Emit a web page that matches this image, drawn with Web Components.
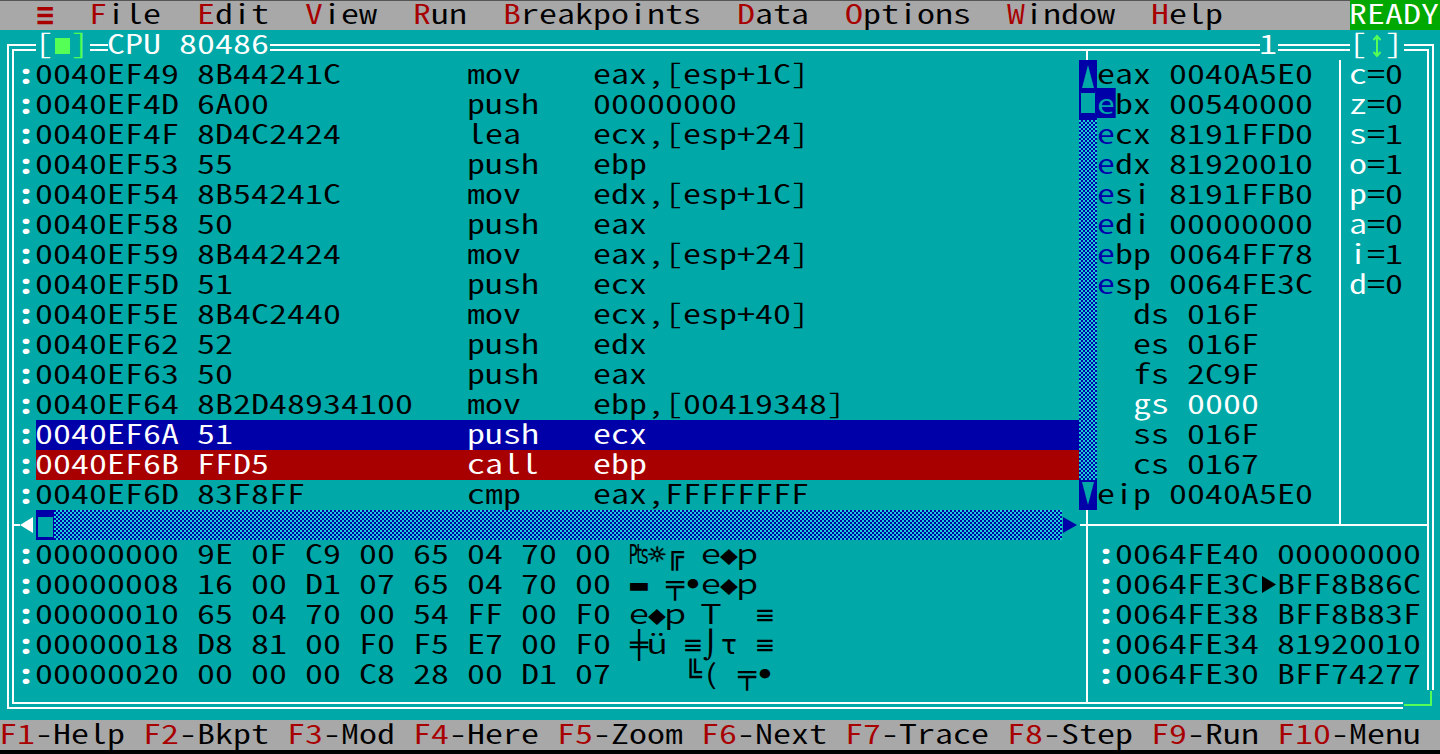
<!DOCTYPE html>
<html lang="en">
<head>
<meta charset="UTF-8">
<title>Turbo Debugger - CPU 80486</title>
<style>
    html, body { margin: 0; height: 754px; overflow: hidden; background: #000; }
</style>
</head>
<body>
<td-app>
    <td-menubar slot="menu">
        <td-menu icon>≡</td-menu>
        <td-menu>File</td-menu>
        <td-menu>Edit</td-menu>
        <td-menu>View</td-menu>
        <td-menu>Run</td-menu>
        <td-menu>Breakpoints</td-menu>
        <td-menu>Data</td-menu>
        <td-menu>Options</td-menu>
        <td-menu>Window</td-menu>
        <td-menu>Help</td-menu>
    </td-menubar>

    <cpu-window slot="desk">
        <div slot="code">
            <asm-row addr="0040EF49" hex="8B44241C" op="mov" args="eax,[esp+1C]"></asm-row>
            <asm-row addr="0040EF4D" hex="6A00" op="push" args="00000000"></asm-row>
            <asm-row addr="0040EF4F" hex="8D4C2424" op="lea" args="ecx,[esp+24]"></asm-row>
            <asm-row addr="0040EF53" hex="55" op="push" args="ebp"></asm-row>
            <asm-row addr="0040EF54" hex="8B54241C" op="mov" args="edx,[esp+1C]"></asm-row>
            <asm-row addr="0040EF58" hex="50" op="push" args="eax"></asm-row>
            <asm-row addr="0040EF59" hex="8B442424" op="mov" args="eax,[esp+24]"></asm-row>
            <asm-row addr="0040EF5D" hex="51" op="push" args="ecx"></asm-row>
            <asm-row addr="0040EF5E" hex="8B4C2440" op="mov" args="ecx,[esp+40]"></asm-row>
            <asm-row addr="0040EF62" hex="52" op="push" args="edx"></asm-row>
            <asm-row addr="0040EF63" hex="50" op="push" args="eax"></asm-row>
            <asm-row addr="0040EF64" hex="8B2D48934100" op="mov" args="ebp,[00419348]"></asm-row>
            <asm-row addr="0040EF6A" hex="51" op="push" args="ecx" state="cursor"></asm-row>
            <asm-row addr="0040EF6B" hex="FFD5" op="call" args="ebp" state="break"></asm-row>
            <asm-row addr="0040EF6D" hex="83F8FF" op="cmp" args="eax,FFFFFFFF"></asm-row>
        </div>
        <h-scroll slot="hbar"></h-scroll>
        <div slot="dump">
            <dump-row addr="00000000" bytes="9E 0F C9 00 65 04 70 00" ascii="₧☼╔ e◆p "></dump-row>
            <dump-row addr="00000008" bytes="16 00 D1 07 65 04 70 00" ascii="▬ ╤•e◆p "></dump-row>
            <dump-row addr="00000010" bytes="65 04 70 00 54 FF 00 F0" ascii="e◆p T  ≡"></dump-row>
            <dump-row addr="00000018" bytes="D8 81 00 F0 F5 E7 00 F0" ascii="╪ü ≡⌡τ ≡"></dump-row>
            <dump-row addr="00000020" bytes="00 00 00 C8 28 00 D1 07" ascii="   ╚( ╤•"></dump-row>
        </div>
        <v-scroll slot="vbar"></v-scroll>
        <div slot="regs">
            <reg-row name="eax" value="0040A5E0"></reg-row>
            <reg-row name="ebx" value="00540000" mark="thumb"></reg-row>
            <reg-row name="ecx" value="8191FFD0" mark="blue"></reg-row>
            <reg-row name="edx" value="81920010" mark="blue"></reg-row>
            <reg-row name="esi" value="8191FFB0" mark="blue"></reg-row>
            <reg-row name="edi" value="00000000" mark="blue"></reg-row>
            <reg-row name="ebp" value="0064FF78" mark="blue"></reg-row>
            <reg-row name="esp" value="0064FE3C" mark="blue"></reg-row>
            <reg-row name="  ds" value="016F"></reg-row>
            <reg-row name="  es" value="016F"></reg-row>
            <reg-row name="  fs" value="2C9F"></reg-row>
            <reg-row name="  gs" value="0000" changed></reg-row>
            <reg-row name="  ss" value="016F"></reg-row>
            <reg-row name="  cs" value="0167"></reg-row>
            <reg-row name="eip" value="0040A5E0"></reg-row>
        </div>
        <div slot="flags">
            <flag-row name="c" value="0"></flag-row>
            <flag-row name="z" value="0"></flag-row>
            <flag-row name="s" value="1"></flag-row>
            <flag-row name="o" value="1"></flag-row>
            <flag-row name="p" value="0"></flag-row>
            <flag-row name="a" value="0"></flag-row>
            <flag-row name="i" value="1"></flag-row>
            <flag-row name="d" value="0"></flag-row>
        </div>
        <div slot="stack">
            <stack-row addr="0064FE40" value="00000000"></stack-row>
            <stack-row addr="0064FE3C" value="BFF8B86C" top></stack-row>
            <stack-row addr="0064FE38" value="BFF8B83F"></stack-row>
            <stack-row addr="0064FE34" value="81920010"></stack-row>
            <stack-row addr="0064FE30" value="BFF74277"></stack-row>
        </div>
    </cpu-window>

    <td-status slot="status">
        <status-key k="F1">Help</status-key>
        <status-key k="F2">Bkpt</status-key>
        <status-key k="F3">Mod</status-key>
        <status-key k="F4">Here</status-key>
        <status-key k="F5">Zoom</status-key>
        <status-key k="F6">Next</status-key>
        <status-key k="F7">Trace</status-key>
        <status-key k="F8">Step</status-key>
        <status-key k="F9">Run</status-key>
        <status-key k="F10">Menu</status-key>
    </td-status>
</td-app>

<script>
    const CELL = 18
    const TEAL = "#00a8a8", BLUE = "#0000a8", RED = "#a80000", GREY = "#a8a8a8", GREEN = "#55ff55"
    const DITHER = `repeating-conic-gradient(${BLUE} 0 25%, #1ad0d8 0 50%) 0 0 / 4px 4px`

    function define(name, html, setup) {
        const tpl = document.createElement("template")
        tpl.innerHTML = html
        customElements.define(name, class extends HTMLElement {
            constructor() {
                super()
                this.attachShadow({ mode: "open" })
                this.shadowRoot.append(tpl.content.cloneNode(true))
            }
            connectedCallback() {
                if (setup && !this.ready) { this.ready = true; setup.call(this, this.shadowRoot) }
            }
        })
    }

    // one line of text mode: half width glyphs stretched to the 18px cell
    define("dos-text", `
        <style>
            :host { display: block; flex: none; height: 30px; }
            div {
                width: 75%; height: 30px; line-height: 30px; white-space: pre;
                transform-origin: 0 0;
                transform: translate(-1px, -2px) scaleX(1.33333);
            }
        </style>
        <div><slot></slot></div>`, function () {
            if (this.hasAttribute("cols")) this.style.width = this.getAttribute("cols") * CELL + "px"
        })

    define("td-app", `
        <style>
            :host {
                display: flex; flex-direction: column; width: 1440px; height: 754px; background: #000; color: #000;
                font-family: "Noto Sans CJK SC", "DejaVu Sans Mono", monospace;
                font-size: 27px; font-weight: 350; font-feature-settings: "hwid";
            }
            .desk { height: 690px; background: ${TEAL}; padding: 14px 6px 0 7px; box-sizing: border-box; }
        </style>
        <slot name="menu"></slot>
        <div class="desk"><slot name="desk"></slot></div>
        <slot name="status"></slot>`)

    define("td-menubar", `
        <style>
            :host {
                display: flex; gap: ${CELL * 2}px; height: 30px; box-sizing: border-box;
                padding-left: ${CELL * 2}px; background: ${GREY}; box-shadow: inset 0 1px #555;
            }
            .ready { margin-left: auto; width: 90px; background: #00a800; color: #fff; }
        </style>
        <slot></slot>
        <div class="ready"><dos-text>READY</dos-text></div>`)

    define("td-menu", `
        <style>
            :host { display: block; flex: none; }
            b { font-weight: inherit; color: ${RED}; }
            .ico {
                display: block; width: 18px; height: 30px; text-align: center;
                font: 700 30px/29px "DejaVu Sans Mono", monospace; color: ${RED}; font-feature-settings: normal;
            }
        </style>
        <dos-text id="t"><b id="h"></b><span id="r"></span></dos-text>`, function (s) {
            const text = this.textContent.trim(), t = s.getElementById("t")
            if (this.hasAttribute("icon")) {
                const ico = document.createElement("span")
                ico.className = "ico"
                ico.textContent = text
                t.replaceWith(ico)
                return
            }
            t.style.width = text.length * CELL + "px"
            s.getElementById("h").textContent = text[0]
            s.getElementById("r").textContent = text.slice(1)
        })

    define("td-status", `
        <style>
            :host { display: flex; gap: ${CELL}px; height: 30px; background: ${GREY}; }
        </style>
        <slot></slot>`)

    define("status-key", `
        <style>
            :host { display: block; flex: none; }
            b { font-weight: inherit; color: ${RED}; }
        </style>
        <dos-text id="t"><b id="k"></b>-<span id="l"></span></dos-text>`, function (s) {
            const k = this.getAttribute("k"), l = this.textContent.trim()
            s.getElementById("k").textContent = k
            s.getElementById("l").textContent = l
            s.getElementById("t").style.width = (k.length + 1 + l.length) * CELL + "px"
        })

    define("cpu-window", `
        <style>
            :host { display: block; height: 665px; }
            .outer { position: relative; height: 100%; box-sizing: border-box; border: 2px solid #fff; padding: 3px; }
            .inner {
                height: 100%; box-sizing: border-box; border: 2px solid #fff;
                display: grid; grid-template-columns: 1072px 2px 1fr;
            }
            .left { position: relative; padding: 9px 0 0 4px; }
            .left > * { display: block; }
            .sep { background: #fff; }
            .right { display: grid; grid-template-rows: 473px 2px 1fr; }
            .upper { display: grid; grid-template-columns: 251px 2px 1fr; }
            .regs { padding: 9px 0 0 10px; }
            .vsep { background: #fff; margin-top: 9px; }
            .flags { padding: 9px 0 0 9px; }
            .stack { padding: 14px 0 0 10px; }
            .code { width: 1062px; }
            .vbar { position: absolute; left: 1065px; top: 9px; }

            /* pieces of text that sit over the top border */
            .title { position: absolute; left: 27px; top: -16px; display: flex; height: 30px; color: #fff; }
            .title > * { background: ${TEAL}; }
            .gap { background: none !important; flex: none; }
            .green { color: ${GREEN}; }
            .sq { flex: none; width: 18px; height: 30px; position: relative; }
            .sq i { position: absolute; left: 1px; top: 8px; width: 15px; height: 16px; background: ${GREEN}; }
            .arr { flex: none; width: 18px; height: 30px; position: relative; }
            .arr svg { position: absolute; left: 0; top: 3px; }

            /* resize corner */
            .corner {
                position: absolute; right: -2px; bottom: -2px; width: 31px; height: 19px; box-sizing: border-box;
                background: ${TEAL};
            }
            .corner i { position: absolute; right: 2px; bottom: 3px; width: 28px; height: 15px; box-sizing: border-box; border: solid ${GREEN}; border-width: 0 2px 2px 0; }
        </style>
        <div class="outer">
            <div class="inner">
                <div class="left">
                    <div class="code"><slot name="code"></slot></div>
                    <slot name="hbar"></slot>
                    <slot name="dump"></slot>
                    <div class="vbar"><slot name="vbar"></slot></div>
                </div>
                <div class="sep"></div>
                <div class="right">
                    <div class="upper">
                        <div class="regs"><slot name="regs"></slot></div>
                        <div class="vsep"></div>
                        <div class="flags"><slot name="flags"></slot></div>
                    </div>
                    <div class="sep"></div>
                    <div class="stack"><slot name="stack"></slot></div>
                </div>
            </div>
            <div class="title">
                <dos-text cols="1">[</dos-text>
                <div class="sq"><i></i></div>
                <dos-text cols="1" class="green">]</dos-text>
                <div class="gap" style="width:18px"></div>
                <dos-text cols="9">CPU 80486</dos-text>
                <div class="gap" style="width:${55 * CELL}px"></div>
                <dos-text cols="1">1</dos-text>
                <div class="gap" style="width:${4 * CELL}px"></div>
                <dos-text cols="1">[</dos-text>
                <div class="arr"><svg width="18" height="26" viewBox="0 0 18 26" fill="none" stroke="${GREEN}" stroke-width="2"><path d="M9 3V23M5.500 7 9 3l3.500 4M5.500 19 9 23l3.500-4"/></svg></div>
                <dos-text cols="1">]</dos-text>
            </div>
            <div class="corner"><i></i></div>
        </div>`)

    const COLON = `<span style="display:block;flex:none;width:18px;color:#fff;font-weight:700"><dos-text>:</dos-text></span>`

    define("asm-row", `
        <style>
            :host { display: flex; height: 30px; }
            .body { flex: 1; }
            :host([state=cursor]) .body { background: ${BLUE}; color: #fff; }
            :host([state=break]) .body { background: ${RED}; color: #fff; }
        </style>
        ${COLON}
        <div class="body"><dos-text id="t"></dos-text></div>`, function (s) {
            const a = n => this.getAttribute(n)
            s.getElementById("t").textContent = a("addr") + " " + a("hex").padEnd(15) + a("op").padEnd(7) + a("args")
        })

    define("dump-row", `
        <style>
            :host { display: flex; height: 30px; }
            .asc {
                display: flex; font: 27px/30px "Noto Sans CJK SC", "DejaVu Sans Mono", monospace; font-weight: 350; white-space: pre;
            }
            .asc span { flex: none; width: 18px; text-align: center; }
            .asc .sym { font-family: "DejaVu Sans Mono", monospace; font-weight: 400; font-feature-settings: normal; transform: scaleX(1.1); }
            .asc .txt { transform: translateY(-2px) scaleX(1.33333); }
            .asc .heavy { font-weight: 700; }
            .asc .sun { text-shadow: 0 0 1px #000, 0 0 1px #000; }
        </style>
        ${COLON}
        <dos-text id="t" cols="33"></dos-text>
        <div class="asc" id="a"></div>`, function (s) {
            s.getElementById("t").textContent = this.getAttribute("addr") + " " + this.getAttribute("bytes")
            for (const c of this.getAttribute("ascii")) {
                const sp = document.createElement("span")
                sp.textContent = c
                sp.className = "epTü(".includes(c) ? "txt" : "sym"
                if (c === "•") sp.classList.add("heavy")
                if (c === "☼") sp.classList.add("sun")
                s.getElementById("a").append(sp)
            }
        })

    define("reg-row", `
        <style>
            :host { display: block; height: 30px; }
            :host([changed]) { color: #fff; }
            i { font-style: normal; display: inline-block; height: 30px; vertical-align: top; }
            :host([mark=blue]) i { color: ${BLUE}; }
            :host([mark=thumb]) i { color: ${TEAL}; background: ${BLUE}; }
        </style>
        <dos-text><i id="e"></i><span id="t"></span></dos-text>`, function (s) {
            const n = this.getAttribute("name"), v = this.getAttribute("value")
            if (n[0] === "e") {
                s.getElementById("e").textContent = "e"
                s.getElementById("t").textContent = n.slice(1) + " " + v
            } else {
                s.getElementById("e").remove()
                s.getElementById("t").textContent = n + " " + v
            }
        })

    define("flag-row", `
        <style>
            :host { display: block; height: 30px; }
            b { font-weight: inherit; color: #fff; }
        </style>
        <dos-text><b id="n"></b>=<span id="v"></span></dos-text>`, function (s) {
            s.getElementById("n").textContent = this.getAttribute("name")
            s.getElementById("v").textContent = this.getAttribute("value")
        })

    define("stack-row", `
        <style>
            :host { display: flex; height: 30px; }
            .tri { flex: none; width: 18px; height: 30px; }
            svg { display: block; visibility: hidden; }
            :host([top]) svg { visibility: visible; }
        </style>
        ${COLON}
        <dos-text id="a" cols="8"></dos-text>
        <div class="tri"><svg width="18" height="30" viewBox="0 0 18 30"><path d="M2 6 16 14.500 2 23z"/></svg></div>
        <dos-text id="v" cols="8"></dos-text>`, function (s) {
            s.getElementById("a").textContent = this.getAttribute("addr")
            s.getElementById("v").textContent = this.getAttribute("value")
        })

    define("h-scroll", `
        <style>
            :host { display: grid; grid-template-columns: 18px 1fr 18px; width: 1062px; height: 30px; position: relative; }
            :host::before, :host::after { content: ""; position: absolute; top: 14px; height: 2px; background: #fff; }
            :host::before { left: -4px; width: 6px; }
            :host::after { right: -6px; width: 6px; }
            svg { display: block; }
            .track { background: ${DITHER}; position: relative; }
            .thumb { position: absolute; left: 0; top: 0; width: 18px; height: 30px; background: ${BLUE}; }
            .thumb i { position: absolute; left: 2px; right: 1px; top: 7px; bottom: 3px; background: ${TEAL}; }
        </style>
        <svg width="18" height="30" viewBox="0 0 18 30"><path d="M2 15 15 7V23z" fill="#fff"/></svg>
        <div class="track"><div class="thumb"><i></i></div></div>
        <svg width="18" height="30" viewBox="0 0 18 30"><path d="M1 7 15 15 1 23z" fill="${BLUE}"/></svg>`)

    define("v-scroll", `
        <style>
            :host { display: flex; flex-direction: column; width: 18px; height: 450px; }
            svg { display: block; flex: none; }
            .thumb { flex: none; height: 30px; background: ${BLUE}; position: relative; }
            .thumb i { position: absolute; left: 2px; right: 2px; top: 3px; bottom: 7px; background: ${TEAL}; }
            .track { flex: 1; background: ${DITHER}; }
        </style>
        <svg width="18" height="30" viewBox="0 0 18 30"><path fill="${BLUE}" d="M0 0H18V30H0z"/><path fill="${TEAL}" d="M9 5 15 28H3z"/></svg>
        <div class="thumb"><i></i></div>
        <div class="track"></div>
        <svg width="18" height="30" viewBox="0 0 18 30"><path fill="${BLUE}" d="M0 0H18V30H0z"/><path fill="${TEAL}" d="M3 2H15L9 25z"/></svg>`)
</script>
</body>
</html>
